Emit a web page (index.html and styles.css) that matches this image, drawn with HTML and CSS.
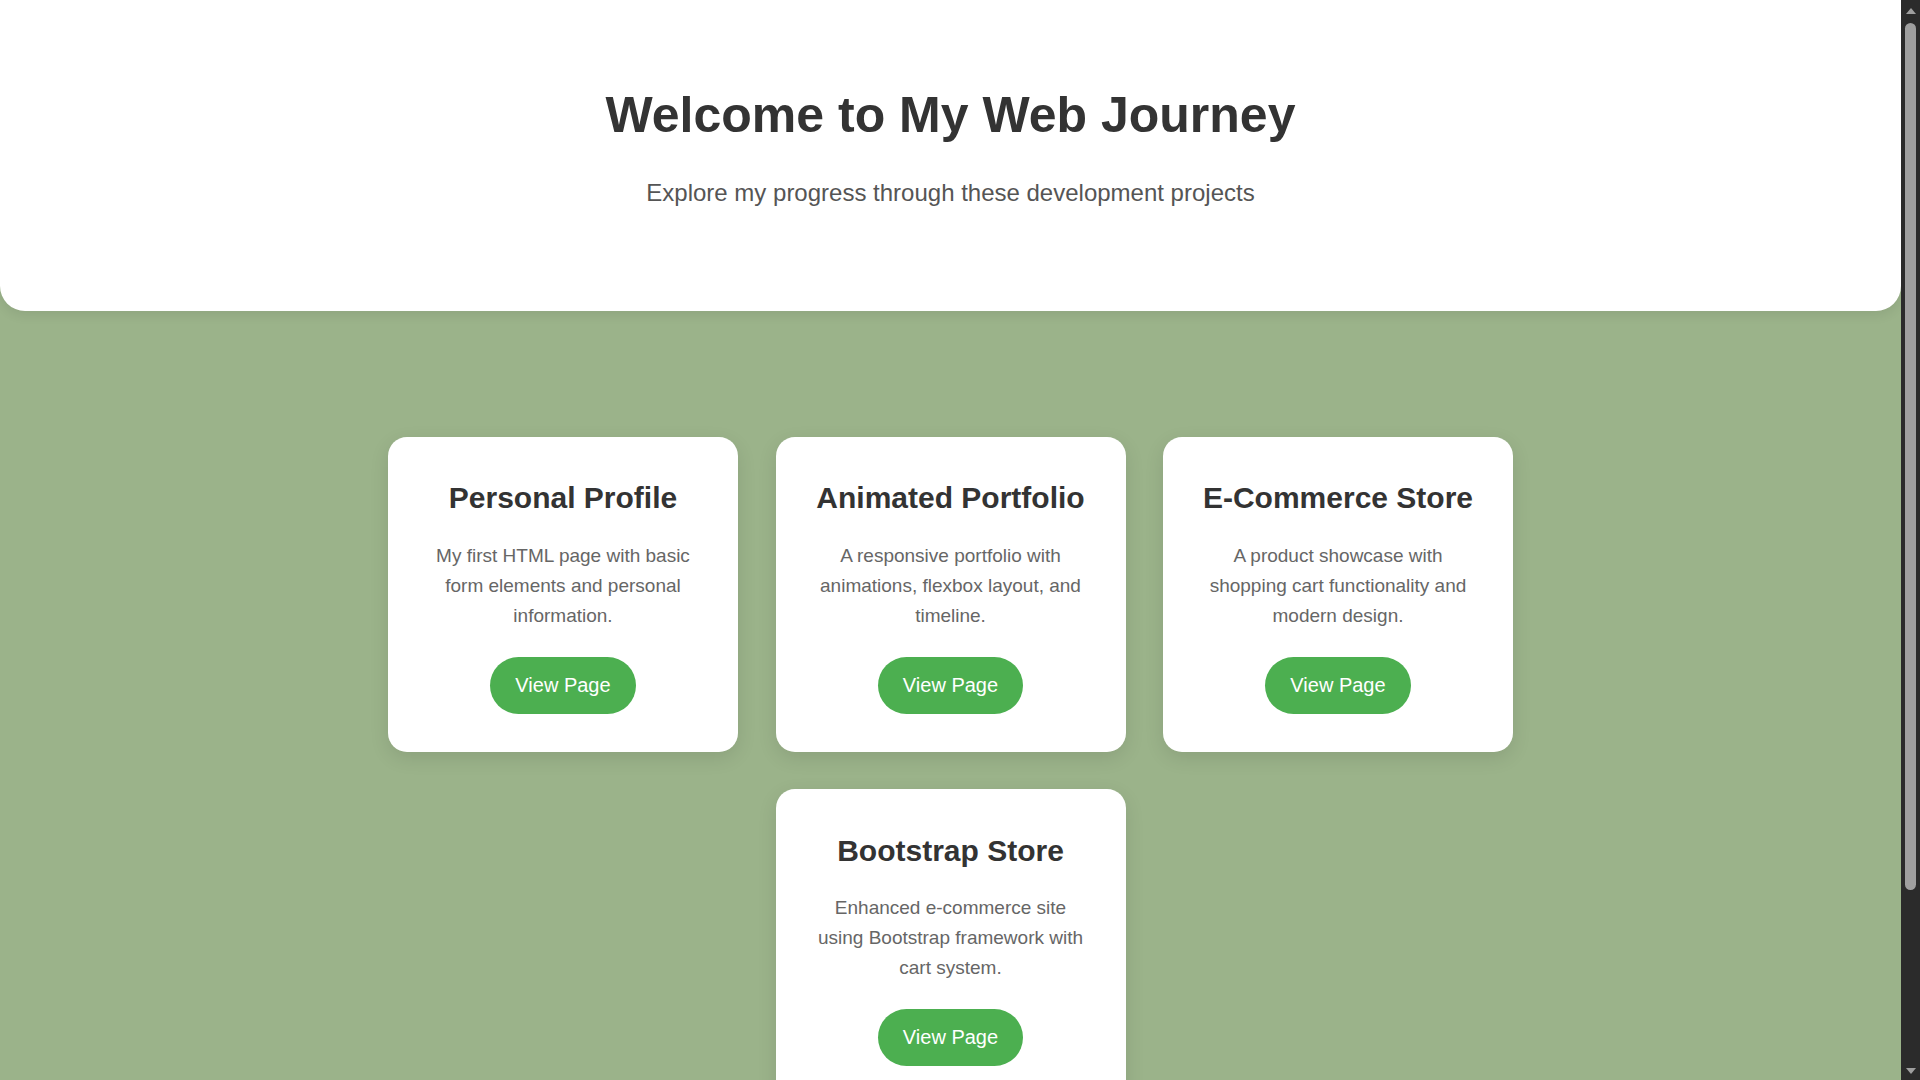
FILE: index.html
```html
<!DOCTYPE html>
<html lang="en">
<head>
<meta charset="UTF-8">
<title>My Web Journey</title>
<link rel="stylesheet" href="styles.css">
</head>
<body>
<div class="page">
  <header class="hero">
    <h1 class="hero-title">Welcome to My Web Journey</h1>
    <p class="hero-sub">Explore my progress through these development projects</p>
  </header>
  <main class="projects">
    <div class="grid">
      <div class="card">
        <h2 class="card-title">Personal Profile</h2>
        <p class="card-desc">My first HTML page with basic form elements and personal information.</p>
        <a class="btn" href="#">View Page</a>
      </div>
      <div class="card">
        <h2 class="card-title">Animated Portfolio</h2>
        <p class="card-desc">A responsive portfolio with animations, flexbox layout, and timeline.</p>
        <a class="btn" href="#">View Page</a>
      </div>
      <div class="card">
        <h2 class="card-title">E-Commerce Store</h2>
        <p class="card-desc">A product showcase with shopping cart functionality and modern design.</p>
        <a class="btn" href="#">View Page</a>
      </div>
      <div class="card">
        <h2 class="card-title">Bootstrap Store</h2>
        <p class="card-desc">Enhanced e-commerce site using Bootstrap framework with cart system.</p>
        <a class="btn" href="#">View Page</a>
      </div>
    </div>
  </main>
</div>
<div class="scrollbar" aria-hidden="true">
  <span class="sb-up"></span>
  <span class="sb-thumb"></span>
  <span class="sb-down"></span>
</div>
</body>
</html>
```
FILE: styles.css
```css
html {
  background: #9bb38a;
}
body {
  margin: 0;
  background: #9bb38a;
  font-family: "Liberation Sans", Arial, sans-serif;
}
.page {
  margin-right: 19px;
}

/* fake browser scrollbar (dark theme) */
.scrollbar {
  position: fixed;
  top: 0;
  right: 0;
  width: 19px;
  height: 100vh;
  background: #2b2b2b;
  display: flex;
  flex-direction: column;
  align-items: center;
}
.sb-up {
  margin-top: 8px;
  width: 0;
  height: 0;
  border-left: 5.5px solid transparent;
  border-right: 5.5px solid transparent;
  border-bottom: 6px solid #9f9f9f;
}
.sb-thumb {
  margin-top: 9px;
  width: 11px;
  height: 867px;
  background: #9f9f9f;
  border-radius: 6px;
}
.sb-down {
  margin-top: auto;
  margin-bottom: 6px;
  width: 0;
  height: 0;
  border-left: 5.5px solid transparent;
  border-right: 5.5px solid transparent;
  border-top: 6px solid #9f9f9f;
}

.hero {
  background: #ffffff;
  border-radius: 0 0 25px 25px;
  text-align: center;
  padding: 86.7px 20px 104.6px;
  box-shadow: 0 4px 12px rgba(0, 0, 0, 0.08);
}
.hero-title {
  margin: 0;
  font-size: 50px;
  line-height: 57.5px;
  font-weight: bold;
  color: #333333;
}
.hero-sub {
  margin: 34.6px 0 0;
  font-size: 24px;
  line-height: 27.6px;
  color: #555555;
}

.projects {
  padding: 126px 0 190px;
}
.grid {
  display: flex;
  flex-wrap: wrap;
  justify-content: center;
  gap: 37.5px;
  max-width: 1130px;
  margin: 0 auto;
}
.card {
  width: 350px;
  box-sizing: border-box;
  background: #ffffff;
  border-radius: 19px;
  padding: 44.5px 37.5px 38px;
  display: flex;
  flex-direction: column;
  align-items: center;
  text-align: center;
  box-shadow: 0 6px 19px rgba(0, 0, 0, 0.1);
}
.card-title {
  margin: 0 0 24.8px;
  font-size: 30px;
  line-height: 34.5px;
  font-weight: bold;
  color: #333333;
}
.card-desc {
  margin: 0 0 26.2px;
  font-size: 19px;
  line-height: 30px;
  color: #666666;
}
.btn {
  display: inline-block;
  background: #4caf50;
  color: #ffffff;
  font-size: 20px;
  line-height: 23px;
  padding: 17px 25px;
  border-radius: 30px;
  text-decoration: none;
}
```
